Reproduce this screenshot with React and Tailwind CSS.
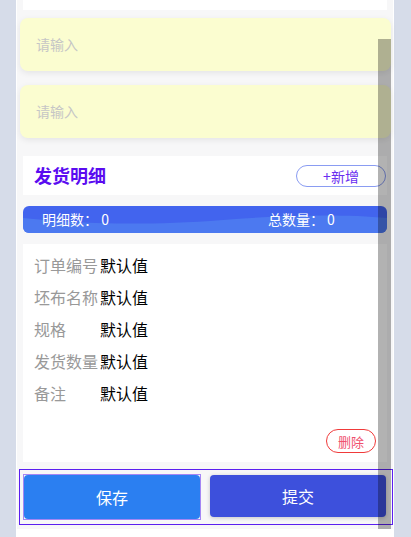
import React from 'react';

const font = { fontFamily: '"Noto Sans CJK SC", "Noto Sans", sans-serif' };

const rows = [
  ['订单编号', '默认值'],
  ['坯布名称', '默认值'],
  ['规格', '默认值'],
  ['发货数量', '默认值'],
  ['备注', '默认值'],
];

function InputBox({ className = '' }) {
  return (
    <div className={`ml-[3px] mr-[2px] h-[53px] rounded-lg bg-[#fbfdd0] shadow-[0_2px_6px_rgba(0,0,0,0.08)] flex items-center pl-4 ${className}`}>
      <span className="text-[14px] text-[#c6c6c6]">请输入</span>
    </div>
  );
}

export default function App() {
  return (
    <div className="w-[411px] h-[537px] bg-[#d6dce9] overflow-hidden flex" style={font}>
      <div className="ml-[16px] w-[378px] h-full border-x border-white bg-[#f7f7f8] relative flex flex-col">
        <div className="mx-[6px] h-[10px] bg-white shrink-0" />
        <InputBox className="mt-[8px] shrink-0" />
        <InputBox className="mt-[14px] shrink-0" />

        <div className="mt-[18px] mx-[6px] h-[39px] bg-white flex items-center justify-between pl-[11px] pr-[1px] shrink-0">
          <span className="text-[18px] font-bold text-[#5a0cf0]">发货明细</span>
          <button className="w-[90px] h-[22px] rounded-full border border-[#8a9cf2] text-[14px] text-[#6a2ef0] leading-none">
            +新增
          </button>
        </div>

        <div className="mt-[11px] mx-[6px] h-[27px] rounded-md bg-[#4264ee] relative overflow-hidden flex items-center shrink-0">
          <svg className="absolute inset-0" width="364" height="27" viewBox="0 0 364 27" preserveAspectRatio="none">
            <path d="M0 12 C60 18 120 20 200 14 C260 9 320 8 364 12 L364 27 L0 27 Z" fill="#5080f0" opacity="0.75" />
          </svg>
          <span className="relative ml-[19px] text-[14px] text-white">明细数： 0</span>
          <span className="relative ml-[159px] text-[14px] text-white">总数量： 0</span>
        </div>

        <div className="mt-[11px] mx-[6px] h-[218px] bg-white flex flex-col pt-[5px] pl-[11px] shrink-0">
          {rows.map(([k, v]) => (
            <div key={k} className="h-[32px] flex items-center text-[16px]">
              <span className="w-[66px] text-[#999999]">{k}</span>
              <span className="text-black">{v}</span>
            </div>
          ))}
          <div className="mt-auto mb-[9px] mr-[11px] flex justify-end">
            <button className="w-[50px] h-[24px] rounded-full border border-[#f03a3a] text-[13px] text-[#f0506e] leading-none">
              删除
            </button>
          </div>
        </div>

        <div className="mt-[7px] ml-[2px] h-[56px] border border-[#5b1ff0] flex items-start pt-[4px] pl-[3px] pr-[6px] gap-[9px] shrink-0">
          <div className="border border-[#a486f4] p-0">
            <button className="w-[176px] h-[44px] rounded bg-[#2b7ff1] text-white text-[16px]">保存</button>
          </div>
          <button className="mt-[1px] w-[176px] h-[42px] rounded bg-[#3d50dc] text-white text-[16px] shadow-[0_1px_4px_rgba(0,0,0,0.2)]">提交</button>
        </div>

        <div className="mt-[4px] flex-1 bg-white" />

        <div className="absolute left-[361px] top-[39px] w-[13px] h-[490px] bg-black/30" />
      </div>
    </div>
  );
}
